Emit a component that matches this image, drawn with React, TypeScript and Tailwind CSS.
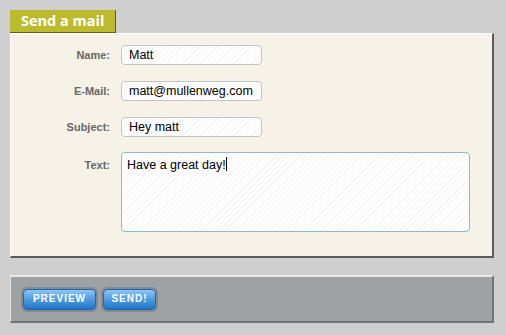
import React from 'react'

const stripes =
  'bg-[repeating-linear-gradient(135deg,#ffffff_0px,#ffffff_3px,#f4f4f4_3px,#f4f4f4_4px)]'

function Field({ label, value }: { label: string; value: string }) {
  return (
    <div className="flex items-center h-[20px] mb-[16px]">
      <label className="w-[99px] text-right text-[11px] font-bold text-[#666666] [font-family:'Liberation_Sans',Arial,sans-serif]">
        {label}
      </label>
      <input
        readOnly
        defaultValue={value}
        className={`ml-[11px] w-[141px] h-[20px] rounded-[4px] border border-[#c4c4c4] ${stripes} px-[7px] text-[12.5px] text-black outline-none [font-family:'Liberation_Sans',Arial,sans-serif]`}
      />
    </div>
  )
}

export default function App() {
  return (
    <div className="min-h-screen bg-[#cfcfcf] pt-[10px] pl-[10px] pr-[12px]">
      {/* tab */}
      <div className="flex w-fit items-center h-[23px] px-[11px] bg-[#bcbb2d] border-r border-b border-[#5f5e1c] text-white text-[14.5px] font-bold leading-none [font-family:'Open_Sans',sans-serif]">
        Send a mail
      </div>

      {/* form box */}
      <div className="bg-[#f6f2e7] border-t border-l border-white border-r-2 border-b-2 border-r-[#5a5a5a] border-b-[#5a5a5a] pt-[11px] pb-[24px]">
        <Field label="Name:" value="Matt" />
        <Field label="E-Mail:" value="matt@mullenweg.com" />
        <Field label="Subject:" value="Hey matt" />
        <div className="flex items-start -mt-[1px]">
          <label className="w-[99px] pt-[5px] text-right text-[11px] font-bold text-[#666666] [font-family:'Liberation_Sans',Arial,sans-serif]">
            Text:
          </label>
          <div
            className={`ml-[11px] w-[349px] h-[80px] rounded-[4px] border border-[#86bdd4] ${stripes} px-[5px] pt-[3px] text-[12.5px] text-black [font-family:'Liberation_Sans',Arial,sans-serif]`}
          >
            Have a great day!
            <span className="inline-block w-px h-[14px] bg-black align-[-2px]" />
          </div>
        </div>
      </div>

      {/* button bar */}
      <div className="mt-[17px] h-[48px] bg-[#9ea2a5] border-t-2 border-l border-t-[#e8e8e8] border-l-[#e8e8e8] border-r-2 border-b-2 border-r-[#707478] border-b-[#707478] flex items-center pl-[12px] gap-[7px]">
        {['PREVIEW', 'SEND!'].map((t) => (
          <button
            key={t}
            className={`${t === 'PREVIEW' ? 'w-[73px]' : 'w-[53px]'} h-[21px] rounded-[4px] border border-[#2164a8] bg-[linear-gradient(#8cc6f7,#4e9ae0_50%,#1f74c8)] shadow-[0_0_0_2px_#868a8e] text-white text-[10px] font-bold tracking-[1px] leading-none [font-family:'Liberation_Sans',Arial,sans-serif]`}
          >
            {t}
          </button>
        ))}
      </div>
    </div>
  )
}
